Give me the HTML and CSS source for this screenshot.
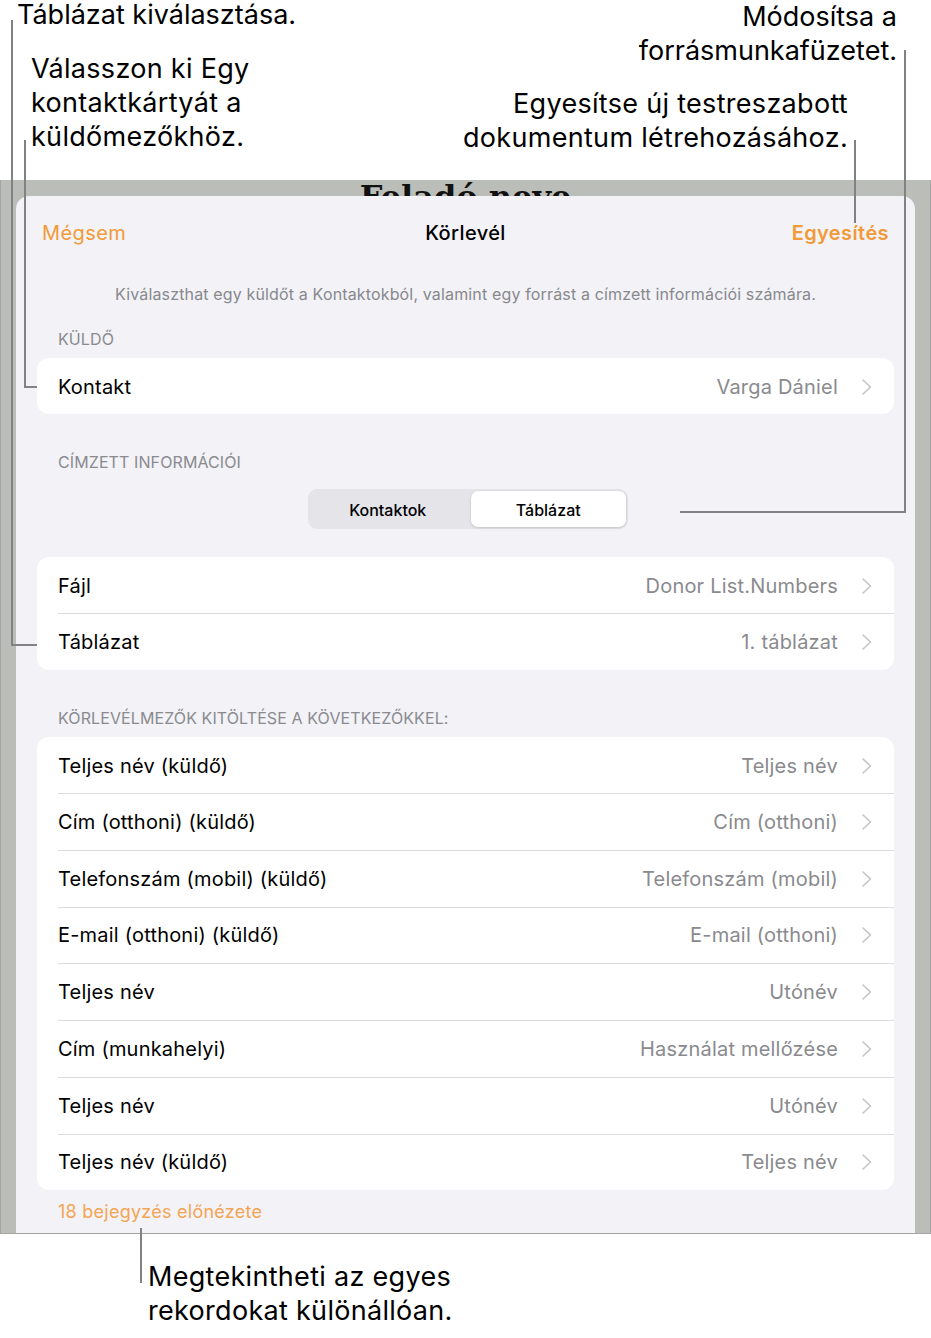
FILE: index.html
```html
<!DOCTYPE html>
<html lang="hu">
<head>
<meta charset="utf-8">
<title>Körlevél</title>
<link rel="stylesheet" href="styles.css">
</head>
<body>
<div class="page">
  <div class="top-space"></div>
  <div class="screen">
    <div class="doc-title">Feladó neve</div>
    <div class="sheet">
      <div class="nav">
        <span class="nav-btn">Mégsem</span>
        <span class="nav-title">Körlevél</span>
        <span class="nav-btn strong">Egyesítés</span>
      </div>
      <p class="desc">Kiválaszthat egy küldőt a Kontaktokból, valamint egy forrást a címzett információi számára.</p>

      <div class="sec-head first">KÜLDŐ</div>
      <div class="card">
        <div class="row"><span class="label">Kontakt</span><span class="value">Varga Dániel</span><svg class="chev" viewBox="0 0 12 18"><path d="M2 2 L9.5 9 L2 16"/></svg></div>
      </div>

      <div class="sec-head">CÍMZETT INFORMÁCIÓI</div>
      <div class="seg-wrap">
        <div class="seg">
          <span class="seg-item">Kontaktok</span>
          <span class="seg-item active">Táblázat</span>
        </div>
      </div>

      <div class="card card-gap">
        <div class="row"><span class="label">Fájl</span><span class="value">Donor List.Numbers</span><svg class="chev" viewBox="0 0 12 18"><path d="M2 2 L9.5 9 L2 16"/></svg></div>
        <div class="row"><span class="label">Táblázat</span><span class="value">1. táblázat</span><svg class="chev" viewBox="0 0 12 18"><path d="M2 2 L9.5 9 L2 16"/></svg></div>
      </div>

      <div class="sec-head">KÖRLEVÉLMEZŐK KITÖLTÉSE A KÖVETKEZŐKKEL:</div>
      <div class="card card-fields">
        <div class="row"><span class="label">Teljes név (küldő)</span><span class="value">Teljes név</span><svg class="chev" viewBox="0 0 12 18"><path d="M2 2 L9.5 9 L2 16"/></svg></div>
        <div class="row"><span class="label">Cím (otthoni) (küldő)</span><span class="value">Cím (otthoni)</span><svg class="chev" viewBox="0 0 12 18"><path d="M2 2 L9.5 9 L2 16"/></svg></div>
        <div class="row"><span class="label">Telefonszám (mobil) (küldő)</span><span class="value">Telefonszám (mobil)</span><svg class="chev" viewBox="0 0 12 18"><path d="M2 2 L9.5 9 L2 16"/></svg></div>
        <div class="row"><span class="label">E-mail (otthoni) (küldő)</span><span class="value">E-mail (otthoni)</span><svg class="chev" viewBox="0 0 12 18"><path d="M2 2 L9.5 9 L2 16"/></svg></div>
        <div class="row"><span class="label">Teljes név</span><span class="value">Utónév</span><svg class="chev" viewBox="0 0 12 18"><path d="M2 2 L9.5 9 L2 16"/></svg></div>
        <div class="row"><span class="label">Cím (munkahelyi)</span><span class="value">Használat mellőzése</span><svg class="chev" viewBox="0 0 12 18"><path d="M2 2 L9.5 9 L2 16"/></svg></div>
        <div class="row"><span class="label">Teljes név</span><span class="value">Utónév</span><svg class="chev" viewBox="0 0 12 18"><path d="M2 2 L9.5 9 L2 16"/></svg></div>
        <div class="row"><span class="label">Teljes név (küldő)</span><span class="value">Teljes név</span><svg class="chev" viewBox="0 0 12 18"><path d="M2 2 L9.5 9 L2 16"/></svg></div>
      </div>
      <div class="preview">18 bejegyzés előnézete</div>
    </div>
  </div>

  <!-- callouts -->
  <div class="note note-a">Táblázat kiválasztása.</div>
  <div class="note note-b">Válasszon ki Egy<br>kontaktkártyát a<br>küldőmezőkhöz.</div>
  <div class="note note-c">Módosítsa a<br>forrásmunkafüzetet.</div>
  <div class="note note-d">Egyesítse új testreszabott<br>dokumentum létrehozásához.</div>
  <div class="note note-e">Megtekintheti az egyes<br>rekordokat különállóan.</div>

  <div class="ln ln-a-v"></div>
  <div class="ln ln-a-h"></div>
  <div class="ln ln-b-v"></div>
  <div class="ln ln-b-h"></div>
  <div class="ln ln-c-v"></div>
  <div class="ln ln-d-v"></div>
  <div class="ln ln-d-h"></div>
  <div class="ln ln-e-v"></div>
</div>
</body>
</html>
```

FILE: styles.css
```css
* { box-sizing: border-box; }
html, body { margin: 0; padding: 0; background: #fff; }
body {
  font-family: Inter, "Noto Sans", "Liberation Sans", sans-serif;
  color: #000;
}
.page {
  position: relative;
  width: 931px;
  height: 1338px;
  overflow: hidden;
}
.top-space { height: 180px; }
.screen {
  height: 1054px;
  background: #bbbdb9;
  border-left: 1px solid #a3a5a2;
  border-right: 1px solid #a3a5a2;
  border-bottom: 1px solid #a3a5a2;
  display: flex;
  flex-direction: column;
  overflow: hidden;
}
.doc-title {
  height: 17px;
  flex: none;
  text-align: center;
  font-family: "DejaVu Serif", "Liberation Serif", serif;
  font-weight: bold;
  font-size: 32px;
  line-height: 36px;
  margin-top: -1px;
  color: #111;
  position: relative;
  z-index: 0;
}
.sheet {
  position: relative;
  z-index: 1;
  flex: 1;
  margin: 0 15px;
  background: #f2f2f7;
  border-radius: 13px 13px 0 0;
  padding: 0 21px;
}
.nav {
  height: 72px;
  display: flex;
  align-items: center;
  justify-content: space-between;
  padding: 2px 5px 0;
  font-size: 20px;
  letter-spacing: 0.4px;
}
.nav-btn { color: #f19a37; }
.nav-btn.strong { font-weight: 600; }
.nav-title {
  font-weight: 500;
  position: absolute;
  left: 0;
  right: 0;
  text-align: center;
  pointer-events: none;
}
.desc {
  margin: 16px 0 0;
  text-align: center;
  color: #88888d;
  font-size: 16px;
  line-height: 20px;
  letter-spacing: 0.15px;
}
.sec-head {
  margin: 36px 0 9px;
  padding: 2px 0 0 21px;
  color: #8a8a8f;
  font-size: 16px;
  line-height: 20px;
  letter-spacing: 0.1px;
}
.sec-head.first { margin-top: 23px; }
.card {
  background: #fff;
  border-radius: 12px;
  overflow: hidden;
}
.card-gap { margin-top: 28px; }
.row {
  height: 56px;
  display: flex;
  align-items: center;
  padding: 2px 21px 0;
  font-size: 20px;
  letter-spacing: 0.2px;
  position: relative;
}
.row + .row { height: 57px; padding-top: 1px; }
.card-fields .row + .row { height: 56.75px; }
.row + .row::before {
  content: "";
  position: absolute;
  left: 21px;
  right: 0;
  top: 0;
  height: 1px;
  background: #dcdce0;
}
.label { flex: 1; }
.value { color: #8a8a8e; }
.chev {
  width: 12px;
  height: 18px;
  margin-left: 23px;
  fill: none;
  stroke: #c4c4c7;
  stroke-width: 1.6;
  stroke-linecap: round;
  stroke-linejoin: round;
}
.seg-wrap {
  display: flex;
  justify-content: center;
  margin-top: 17px;
}
.seg {
  width: 320px;
  height: 40px;
  background: #e4e4e9;
  border-radius: 9px;
  display: flex;
  padding: 2px;
  margin-left: 5px;
}
.seg-item {
  flex: 1;
  display: flex;
  align-items: center;
  justify-content: center;
  padding-top: 1px;
  font-size: 16px;
  font-weight: 500;
}
.seg-item:first-child { padding-right: 5px; }
.seg-item.active {
  background: #fff;
  border-radius: 7px;
  box-shadow: 0 1px 3px rgba(0,0,0,0.12), 0 0 0 0.5px rgba(0,0,0,0.04);
}
.preview {
  margin-top: 12px;
  padding-left: 21px;
  color: #f3a553;
  font-size: 18px;
  line-height: 20px;
  letter-spacing: 0.25px;
}

.note {
  position: absolute;
  font-size: 27px;
  line-height: 34px;
  letter-spacing: 0.3px;
  color: #000;
  white-space: nowrap;
}
.note-a { left: 17px; top: 0; line-height: 30px; letter-spacing: 0; }
.note-b { left: 31px; top: 52px; }
.note-c { right: 34px; top: 0; text-align: right; letter-spacing: 0; }
.note-d { right: 83px; top: 87px; text-align: right; }
.note-e { left: 148px; top: 1260px; }

.ln { position: absolute; z-index: 5; background: #828282; }
.ln-a-v { left: 11px; top: 20px; width: 2px; height: 626px; }
.ln-a-h { left: 11px; top: 644px; width: 26px; height: 2px; }
.ln-b-v { left: 24px; top: 140px; width: 2px; height: 248px; }
.ln-b-h { left: 24px; top: 386px; width: 13px; height: 2px; }
.ln-c-v { left: 854px; top: 140px; width: 2px; height: 83px; }
.ln-d-v { left: 904px; top: 50px; width: 2px; height: 463px; }
.ln-d-h { left: 680px; top: 511px; width: 226px; height: 2px; }
.ln-e-v { left: 140px; top: 1228px; width: 2px; height: 55px; }
```
